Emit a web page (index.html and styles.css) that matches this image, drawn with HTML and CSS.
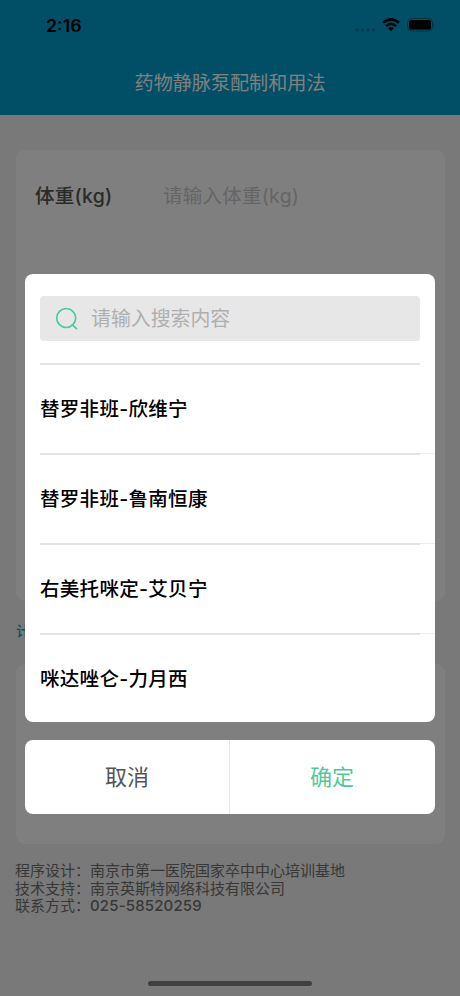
FILE: index.html
```html
<!DOCTYPE html>
<html lang="zh-CN">
<head>
<meta charset="utf-8">
<title>药物静脉泵配制和用法</title>
<link rel="stylesheet" href="styles.css">
</head>
<body>
<div class="page">
  <header class="header">
    <div class="status">
      <span class="time">2:16</span>
      <div class="status-icons">
        <span class="signal"><i></i><i></i><i></i><i></i></span>
        <svg class="wifi" width="18" height="14" viewBox="0 0 18 14"><path d="M1 4.8Q9-2.1 17 4.8M4 8Q9 3.7 14 8" fill="none" stroke="#000" stroke-width="2.5"/><path d="M6.1 10.2Q9 7.9 11.9 10.2L9 13.2Z"/></svg>
        <svg class="battery" width="28" height="14" viewBox="0 0 28 14"><rect x=".5" y=".5" width="25" height="12.4" rx="4" fill="none" stroke="#000" stroke-opacity=".35"/><rect x="2" y="2" width="22" height="9.5" rx="2.6"/><path d="M26.7 4.7q1.6 2 0 4z" fill-opacity=".4"/></svg>
      </div>
    </div>
    <h1 class="title">药物静脉泵配制和用法</h1>
  </header>
  <main class="content">
    <section class="card form">
      <div class="field"><span class="label">体重(kg)</span><span class="placeholder">请输入体重(kg)</span></div>
    </section>
    <h2 class="result-title">计算结果</h2>
    <section class="card result"></section>
    <footer class="footer">
      <p>程序设计：南京市第一医院国家卒中中心培训基地</p>
      <p>技术支持：南京英斯特网络科技有限公司</p>
      <p>联系方式：<span class="phone">025-58520259</span></p>
    </footer>
  </main>
</div>
<div class="overlay">
  <div class="picker">
    <div class="search">
      <svg width="24" height="24" viewBox="0 0 24 24" fill="none" stroke="#4fc99c" stroke-width="1.7" stroke-linecap="round"><circle cx="11.2" cy="11" r="9.5"/><path d="M17.3 17.8 21.5 21.7"/></svg>
      <span>请输入搜索内容</span>
    </div>
    <ul class="list">
      <li>替罗非班-欣维宁</li>
      <li>替罗非班-鲁南恒康</li>
      <li>右美托咪定-艾贝宁</li>
      <li>咪达唑仑-力月西</li>
    </ul>
  </div>
  <div class="actions">
    <div class="cancel">取消</div>
    <div class="confirm">确定</div>
  </div>
  <div class="home-bar"></div>
</div>
</body>
</html>
```
FILE: styles.css
```css
* { box-sizing: border-box; margin: 0; padding: 0; }
body {
  width: 460px;
  height: 996px;
  overflow: hidden;
  font-family: Inter, "Noto Sans CJK SC", sans-serif;
  background: #f2f2f2;
}
.page { height: 996px; }
.header { height: 115px; background: #009ecc; }
.status {
  display: flex;
  justify-content: space-between;
  height: 50px;
  padding: 0 25px 0 46px;
}
.time { padding-top: 15px; font-size: 17.8px; line-height: 22px; font-weight: 600; }
.status-icons { display: flex; align-items: flex-start; padding-top: 18px; }
.signal { display: flex; gap: 2px; padding: 10px 7px 0 0; }
.signal i { width: 3.5px; height: 3.5px; border-radius: 50%; background: rgba(0, 0, 0, .2); }
.wifi { margin-right: 7px; }
.title {
  padding-top: 19px;
  text-align: center;
  font-size: 19.1px;
  line-height: 28px;
  font-weight: 400;
  color: #fff;
}
.content { padding: 35px 15px 0 16px; }
.card { background: #fff; border-radius: 9px; }
.form { height: 451px; padding: 31px 19px; }
.field { display: flex; font-size: 19.5px; line-height: 30px; letter-spacing: .25px; }
.label { width: 128px; color: #555; font-weight: 500; }
.placeholder { color: #cacaca; }
.result-title {
  padding: 18px 0 21px;
  font-size: 14px;
  line-height: 24px;
  font-weight: 500;
  color: #00b0c4;
}
.result { height: 180px; }
.footer {
  margin-left: -1px;
  padding-top: 18px;
  font-size: 15px;
  line-height: 17.5px;
  color: #707070;
}
.phone { letter-spacing: .15px; font-weight: 500; }
.overlay {
  position: absolute;
  inset: 0;
  display: flex;
  flex-direction: column;
  padding: 274px 25px 0;
  background: rgba(0, 0, 0, .5);
}
.picker { height: 448px; padding-top: 22px; background: #fff; border-radius: 8px; overflow: hidden; }
.search {
  display: flex;
  align-items: center;
  gap: 12px;
  height: 45px;
  margin: 0 15px 22px;
  padding-left: 15px;
  border-radius: 4px;
  background: #e7e7e7;
  color: #afafb2;
  font-size: 19.9px;
}
.search span { margin-top: -2px; }
.list { list-style: none; }
.list li {
  height: 90px;
  padding-left: 15px;
  font-size: 19.5px;
  line-height: 92px;
  letter-spacing: .3px;
  font-weight: 500;
  color: #000;
  background: linear-gradient(#e4e4e4, #e4e4e4) 15px 0 / 380px 2px no-repeat;
}
.list li + li {
  background:
    linear-gradient(#e4e4e4, #e4e4e4) 15px 0 / 380px 2px no-repeat,
    linear-gradient(#ececec, #ececec) 15px 0 / 395px 1px no-repeat;
}
.actions {
  display: flex;
  height: 74px;
  margin-top: 18px;
  border-radius: 8px;
  background: #fff;
  font-size: 22px;
  line-height: 75px;
  text-align: center;
}
.cancel { width: 205px; border-right: 1px solid #e6e6e6; color: #555; }
.confirm { flex: 1; padding-right: 1px; color: #4fc99c; }
.home-bar { width: 164px; height: 5px; margin: 167px auto 0; border-radius: 3px; background: #404040; }
```
